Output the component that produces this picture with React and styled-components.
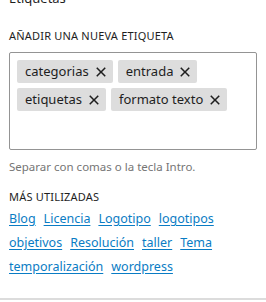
import React from "react"
import styled, { createGlobalStyle } from "styled-components"

const GlobalStyle = createGlobalStyle`
	body {
		margin: 0;
		background: #fff;
		font-family: "Noto Sans", "Open Sans", sans-serif;
		color: #1e1e1e;
	}
`

const tags = ["categorias", "entrada", "etiquetas", "formato texto"]

const popular = [
	"Blog",
	"Licencia",
	"Logotipo",
	"logotipos",
	"objetivos",
	"Resolución",
	"taller",
	"Tema",
	"temporalización",
	"wordpress",
]

const CloseIcon = () => (
	<svg width="24" height="24" viewBox="0 0 24 24" aria-hidden="true">
		<path
			fill="currentColor"
			d="M12 13.06l3.712 3.713 1.061-1.06L13.061 12l3.712-3.712-1.06-1.06L12 10.938 8.288 7.227l-1.061 1.06L10.939 12l-3.712 3.712 1.06 1.061L12 13.061z"
		/>
	</svg>
)

const App = () => (
	<>
		<GlobalStyle />
		<Panel>
			<Heading>Etiquetas</Heading>
			<Label>Añadir una nueva etiqueta</Label>
			<TokenField>
				{tags.map((tag) => (
					<Token key={tag}>
						<TokenText>{tag}</TokenText>
						<RemoveButton aria-label={`Eliminar ${tag}`}>
							<CloseIcon />
						</RemoveButton>
					</Token>
				))}
			</TokenField>
			<Help>Separar con comas o la tecla Intro.</Help>
			<Label $small>Más utilizadas</Label>
			<Cloud>
				{popular.map((term) => (
					<CloudLink key={term} href="#">
						{term}
					</CloudLink>
				))}
			</Cloud>
		</Panel>
	</>
)

const Panel = styled.div`
	width: 266px;
	height: 300px;
	box-sizing: border-box;
	padding: 0 9px;
	overflow: hidden;
	border-bottom: 2px solid #dcdcdc;
`

const Heading = styled.h2`
	margin: -10px 0 0;
	font-size: 13px;
	font-weight: 400;
	line-height: 16px;
`

const Label = styled.div`
	margin-top: ${(props) => (props.$small ? "14px" : "22px")};
	font-size: 11px;
	line-height: 16px;
	text-transform: uppercase;
	letter-spacing: 0.2px;
`

const TokenField = styled.div`
	margin-top: 8px;
	height: 98px;
	box-sizing: border-box;
	border: 1px solid #949494;
	border-radius: 2px;
	padding: 7px;
	display: flex;
	flex-wrap: wrap;
	align-content: flex-start;
	gap: 5px 5px;
`

const Token = styled.span`
	display: flex;
	align-items: center;
	height: 23px;
	background: #ddd;
	border-radius: 2px;
	padding-left: 8px;
`

const TokenText = styled.span`
	font-size: 13px;
	line-height: 23px;
`

const RemoveButton = styled.button`
	display: flex;
	align-items: center;
	justify-content: center;
	width: 24px;
	height: 23px;
	padding: 0;
	border: none;
	background: transparent;
	color: #1e1e1e;
	cursor: pointer;
`

const Help = styled.p`
	margin: 9px 0 0;
	font-size: 11.5px;
	line-height: 16px;
	color: #757575;
`

const Cloud = styled.div`
	margin-top: 2px;
	display: flex;
	flex-wrap: wrap;
	column-gap: 8px;
	line-height: 24px;
`

const CloudLink = styled.a`
	font-size: 12.5px;
	color: #0a7cc4;
	text-decoration: underline;
	text-underline-offset: 2px;
`

export default App
